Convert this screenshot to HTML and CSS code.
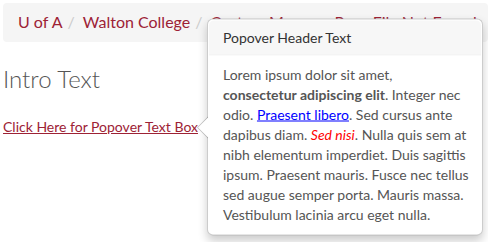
FILE: index.html
```html
<html>
    <head>
        <link rel="stylesheet" href="styles.css">
    </head>
    <body>
        <ol class="breadcrumb">
            <li><a href="#">U of A</a></li>
            <li><a href="#">Walton College</a></li>
            <li><a href="#">Custom Message Page File Not Found</a></li>
        </ol>
        <h1 class="intro">Intro Text</h1>
        <div class="trigger-row">
            <span class="trigger">
                <a href="#" class="trigger-link">Click Here for Popover Text Box</a>
                <span class="popover">
                    <span class="arrow"></span>
                    <span class="popover-title">Popover Header Text</span>
                    <span class="popover-content">
                        Lorem ipsum dolor sit amet, <b>consectetur adipiscing elit</b>. Integer nec odio. <a href="#" class="blue">Praesent libero</a>. Sed cursus ante dapibus diam. <i class="red">Sed nisi</i>. Nulla quis sem at nibh elementum imperdiet. Duis sagittis ipsum. Praesent mauris. Fusce nec tellus sed augue semper porta. Mauris massa. Vestibulum lacinia arcu eget nulla.
                    </span>
                </span>
            </span>
        </div>
    </body>
</html>
```

FILE: styles.css
```css
body {
    margin: 3px;
    font-family: Lato, 'Open Sans', sans-serif;
    font-size: 14px;
    line-height: 1.42857;
    color: #555;
    background: #fff;
}
.breadcrumb {
    margin: 0;
    padding: 8px 15px;
    list-style: none;
    background-color: #f5f5f5;
    border-radius: 4px;
    white-space: nowrap;
    overflow: hidden;
    font-size: 16px;
}
.breadcrumb li {
    display: inline-block;
}
.breadcrumb li + li:before {
    content: "/";
    padding: 0 8px 0 1px;
    color: #ccc;
}
.breadcrumb a {
    color: #9d2235;
    text-decoration: none;
}
h1.intro {
    margin: 24px 0 0;
    font-size: 24px;
    font-weight: 300;
    line-height: 1.1;
    color: #555;
}
.trigger-row {
    margin: 25px 0 0;
}
.trigger {
    position: relative;
    display: inline-block;
}
.trigger-link {
    color: #9d2235;
    text-decoration: underline;
}
.popover {
    position: absolute;
    left: 100%;
    top: 50%;
    transform: translateY(-50%);
    margin-left: 9px;
    width: 272px;
    padding: 1px;
    background: #fff;
    border: 1px solid rgba(0, 0, 0, .2);
    border-radius: 6px;
    box-shadow: 0 5px 10px rgba(0, 0, 0, .2);
    font-size: 14px;
    line-height: 20px;
    color: #555;
}
.popover-title {
    display: block;
    margin: 0;
    padding: 7px 14px;
    font-size: 14px;
    font-weight: 400;
    color: #333;
    background-color: #f7f7f7;
    border-bottom: 1px solid #ebebeb;
    border-radius: 5px 5px 0 0;
}
.popover-content {
    display: block;
    padding: 9px 12px 9px 14px;
}
.blue {
    color: #00f;
}
.red {
    color: #f00;
}
.arrow,
.arrow:after {
    position: absolute;
    width: 0;
    height: 0;
    border: solid transparent;
}
.arrow {
    left: -11px;
    top: 50%;
    margin-top: -11px;
    border-width: 11px 11px 11px 0;
    border-right-color: rgba(0, 0, 0, .25);
}
.arrow:after {
    content: "";
    left: 1px;
    bottom: -10px;
    border-width: 10px 10px 10px 0;
    border-right-color: #fff;
}
```
